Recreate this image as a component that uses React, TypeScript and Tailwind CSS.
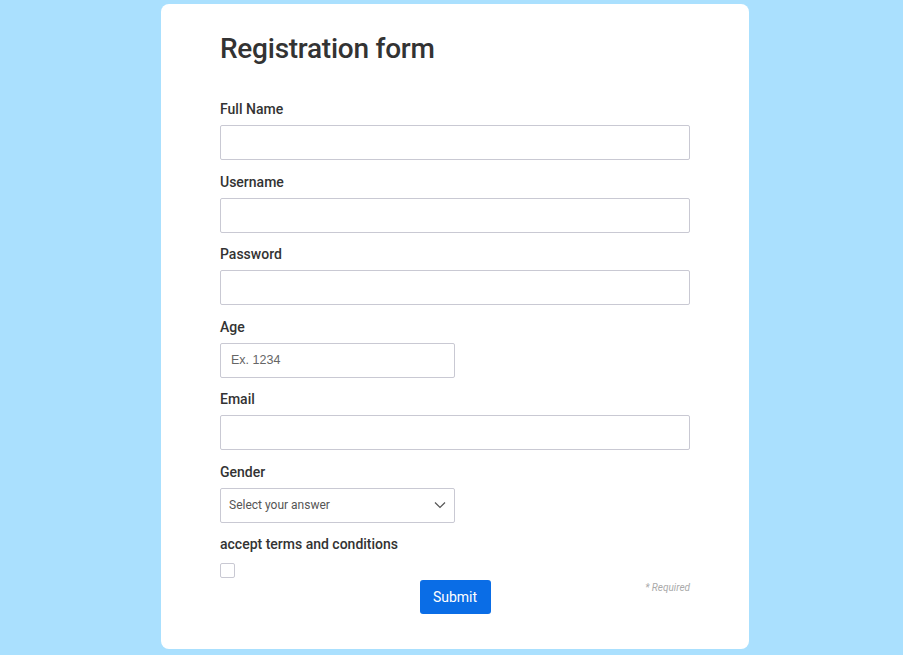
import React from 'react';

const fields = [
	{ id: 'fullName', label: 'Full Name', half: false },
	{ id: 'username', label: 'Username', half: false },
	{ id: 'password', label: 'Password', half: false, type: 'password' },
	{ id: 'age', label: 'Age', half: true, placeholder: 'Ex. 1234' },
	{ id: 'email', label: 'Email', half: false, type: 'email' },
];

export default function App() {
	return (
		<div className="min-h-[655px] bg-[#aae0fe] flex pl-[161px] pt-[4px] font-['Roboto',sans-serif]">
			<div className="w-[588px] h-[645px] bg-white rounded-lg pl-[59px] pr-[59px] pt-[27px]">
				<h1 className="text-[28px] leading-[36px] font-medium text-[#333333] tracking-[-0.25px]">Registration form</h1>
				<form className="mt-[32px] flex flex-col">
					{fields.map((f) => (
						<div key={f.id} className="flex flex-col mb-[11.5px]">
							<label htmlFor={f.id} className="text-[14px] leading-[20px] font-medium text-[#333333] mb-[6px]">{f.label}</label>
							<input
								id={f.id}
								type={f.type || 'text'}
								placeholder={f.placeholder}
								className={`${f.half ? 'w-[235px]' : 'w-[470px]'} h-[35px] border border-[#c9c9d3] rounded-[2px] px-[10px] text-[12.5px] font-['Liberation_Sans',sans-serif] text-[#333] placeholder:text-[#666] outline-none`}
							/>
						</div>
					))}
					<div className="flex flex-col mb-[11.5px]">
						<label htmlFor="gender" className="text-[14px] leading-[20px] font-medium text-[#333333] mb-[6px]">Gender</label>
						<div className="relative w-[235px]">
							<select
								id="gender"
								defaultValue=""
								className="appearance-none w-full h-[35px] border border-[#c9c9d3] rounded-[2px] pl-[8px] pr-[30px] text-[12px] text-[#555] bg-white outline-none"
							>
								<option value="" disabled>Select your answer</option>
								<option>Male</option>
								<option>Female</option>
								<option>Other</option>
							</select>
							<svg className="absolute right-[9px] top-[13px] pointer-events-none" width="12" height="8" viewBox="0 0 12 8" fill="none">
								<path d="M1 1.5L6 6.5L11 1.5" stroke="#555" strokeWidth="1.2" />
							</svg>
						</div>
					</div>
					<label htmlFor="terms" className="text-[14px] leading-[20px] font-medium text-[#333333]">accept terms and conditions</label>
					<input id="terms" type="checkbox" className="appearance-none mt-[9px] w-[15px] h-[15px] border border-[#c9c9d3] rounded-[2px] bg-white" />
					<div className="relative flex justify-center mt-[2px] w-[470px]">
						<button type="submit" className="w-[71px] h-[34px] bg-[#0a6de6] text-white text-[14px] rounded-[3px]">Submit</button>
						<span className="absolute right-0 top-[0px] text-[10px] italic text-[#aaaaaa]">* Required</span>
					</div>
				</form>
			</div>
		</div>
	);
}
